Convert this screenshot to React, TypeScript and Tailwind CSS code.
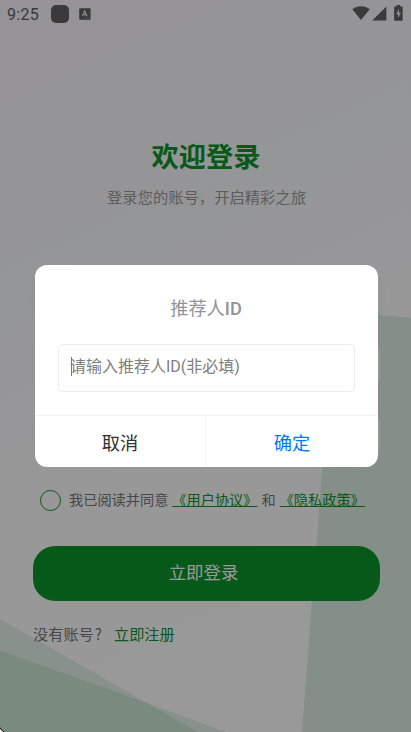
import { useState } from "react";

function StatusBar() {
	return (
		<header className="flex h-7 items-center pl-[7px] pr-[8px] text-[#616161]">
			<span className="w-[44px] pt-px text-[16px] leading-7 tracking-[0.3px]">
				9:25
			</span>
			<span className="h-[18px] w-[18px] rounded-[5px] bg-[#616161]" />
			<svg className="ml-[10px]" width="12" height="12" viewBox="0 0 12 12">
				<rect x="0.2" y="0.2" width="11.4" height="11.6" rx="1" fill="#616161" />
				<path
					d="M3.3 8.2 5.7 3l2.4 5.2M4.3 6.6h2.8"
					fill="none"
					stroke="#e8e8ec"
					strokeWidth="1.2"
				/>
				<path d="M6 10h1M8.5 10h1" stroke="#e8e8ec" strokeWidth="0.8" />
			</svg>
			<div className="relative -top-px ml-auto flex items-center">
				<svg width="18" height="16" viewBox="0 0 18 16" fill="#616161">
					<path d="M0.3 4.2C5.3.2 12.7.2 17.7 4.2L9 15z" />
				</svg>
				<svg
					className="ml-[2px]"
					width="15"
					height="15"
					viewBox="0 0 15 15"
					fill="#616161"
				>
					<path d="M14.4.5v14H.2z" />
				</svg>
				<svg
					className="ml-[7px]"
					width="9"
					height="16"
					viewBox="0 0 9 16"
					fill="#616161"
				>
					<path d="M2.6 0h3.6v1.6h1.6q.9 0 .9.9v12.3q0 .9-.9.9H1q-.9 0-.9-.9V2.5q0-.9.9-.9h1.6z" />
					<path d="M5 4 2 9.2h2V13l3-5.2H5z" fill="#e8e8ec" />
				</svg>
			</div>
		</header>
	);
}

function Backdrop() {
	return (
		<svg
			className="absolute inset-0"
			width="411"
			height="732"
			viewBox="0 0 411 732"
		>
			<path d="M334 313Q375 314 411 318V732H302Z" fill="#dceee1" />
			<path d="M0 619 198 732H0Z" fill="#e3f2e8" />
			<path d="M0 650.500 147 703 198 732H0Z" fill="#cbe6d4" />
			<path d="M147 703 226 732H198Z" fill="#e3f2e8" />
		</svg>
	);
}

interface ReferrerDialogProps {
	value: string;
	onChange: (value: string) => void;
	onClose: () => void;
}

function ReferrerDialog({ value, onChange, onClose }: ReferrerDialogProps) {
	return (
		<div className="absolute inset-0 bg-black/40 pl-[35px] pt-[265px]">
			<div className="flex h-[202px] w-[343px] flex-col overflow-hidden rounded-[12px] bg-white">
				<h2 className="pr-px pt-[30px] text-center text-[18.2px] font-normal leading-[27px] text-[#909399]">
					推荐人<span className="font-medium">ID</span>
				</h2>
				<div className="mx-[23px] mt-[22px] flex h-[48px] items-center rounded-[5px] border border-[#ececec] pl-[12px] pb-[3px]">
					<span className="h-[19px] w-px bg-[#777]" />
					<input
						value={value}
						onChange={(e) => onChange(e.target.value)}
						placeholder="请输入推荐人ID(非必填)"
						className="-ml-[2px] w-[260px] text-[16px] leading-6 outline-none placeholder:text-[#808080]"
					/>
				</div>
				<div className="mt-auto flex h-[52px] border-t border-[#f3f3f3] text-[18.2px]">
					<button
						type="button"
						onClick={onClose}
						className="w-[171px] border-r border-[#f3f3f3] pt-[4px] text-[#303133]"
					>
						取消
					</button>
					<button
						type="button"
						onClick={onClose}
						className="flex-1 pt-[4px] text-[#007aff]"
					>
						确定
					</button>
				</div>
			</div>
		</div>
	);
}

export default function App() {
	const [open, setOpen] = useState(true);
	const [referrer, setReferrer] = useState("");

	return (
		<div className="relative h-[732px] w-[411px] overflow-hidden bg-[linear-gradient(155deg,#f8f5fe_0%,#f8f9fd_25%,#fcfcfd_50%,#ffffff_80%)] font-[Roboto,'Noto_Sans_CJK_SC',sans-serif]">
			<Backdrop />
			<div className="relative">
				<StatusBar />
				<main className="pl-[33px] pr-[31px] pt-[110px]">
					<h1 className="pr-px text-center text-[27.2px] font-bold leading-10 text-[#0d942b]">
						欢迎登录
					</h1>
					<p className="mt-[8px] text-center text-[15.3px] leading-6 text-[#999]">
						登录您的账号，开启精彩之旅
					</p>
					<div className="mt-[60px] flex h-[187px] flex-col gap-[28px] pt-[2px]">
						<div className="h-[44px] rounded-[9px] shadow-[0_2px_8px_rgba(0,0,0,0.04)]" />
						<div className="h-[44px] rounded-[9px] bg-[#f8f8f8]" />
						<div className="h-[44px] rounded-[9px] bg-[#f8f8f8]" />
					</div>
					<div className="mt-[31px] flex items-center pl-[7px] text-[14.2px] leading-6 text-[#777]">
						<span className="h-[21px] w-[21px] rounded-full border border-[#0d942b]" />
						<span className="ml-[8px]">我已阅读并同意</span>
						<a className="ml-[4px] text-[#0d942b] underline">《用户协议》</a>
						<span className="mx-[4px]">和</span>
						<a className="text-[#0d942b] underline">《隐私政策》</a>
					</div>
					<button
						type="button"
						className="mt-[34px] h-[55px] w-full rounded-[22px] bg-[#0d942b] pr-[6px] text-[17.4px] text-white"
					>
						立即登录
					</button>
					<p className="mt-[20px] text-[15.2px] leading-6 text-[#777]">
						没有账号
						<span className="ml-px font-['Noto_Sans_CJK_SC',sans-serif]">?</span>
						<a className="ml-[12px] text-[#0d942b]">立即注册</a>
					</p>
				</main>
			</div>
			{open && (
				<ReferrerDialog
					value={referrer}
					onChange={setReferrer}
					onClose={() => setOpen(false)}
				/>
			)}
			<svg
				className="absolute bottom-0 left-0"
				width="5"
				height="5"
				viewBox="0 0 5 5"
			>
				<path d="M0 1Q1 4 4 5H0Z" fill="#fff" />
				<path d="M0 .5Q1 3.500 4.500 5" fill="none" stroke="#111" />
			</svg>
		</div>
	);
}
